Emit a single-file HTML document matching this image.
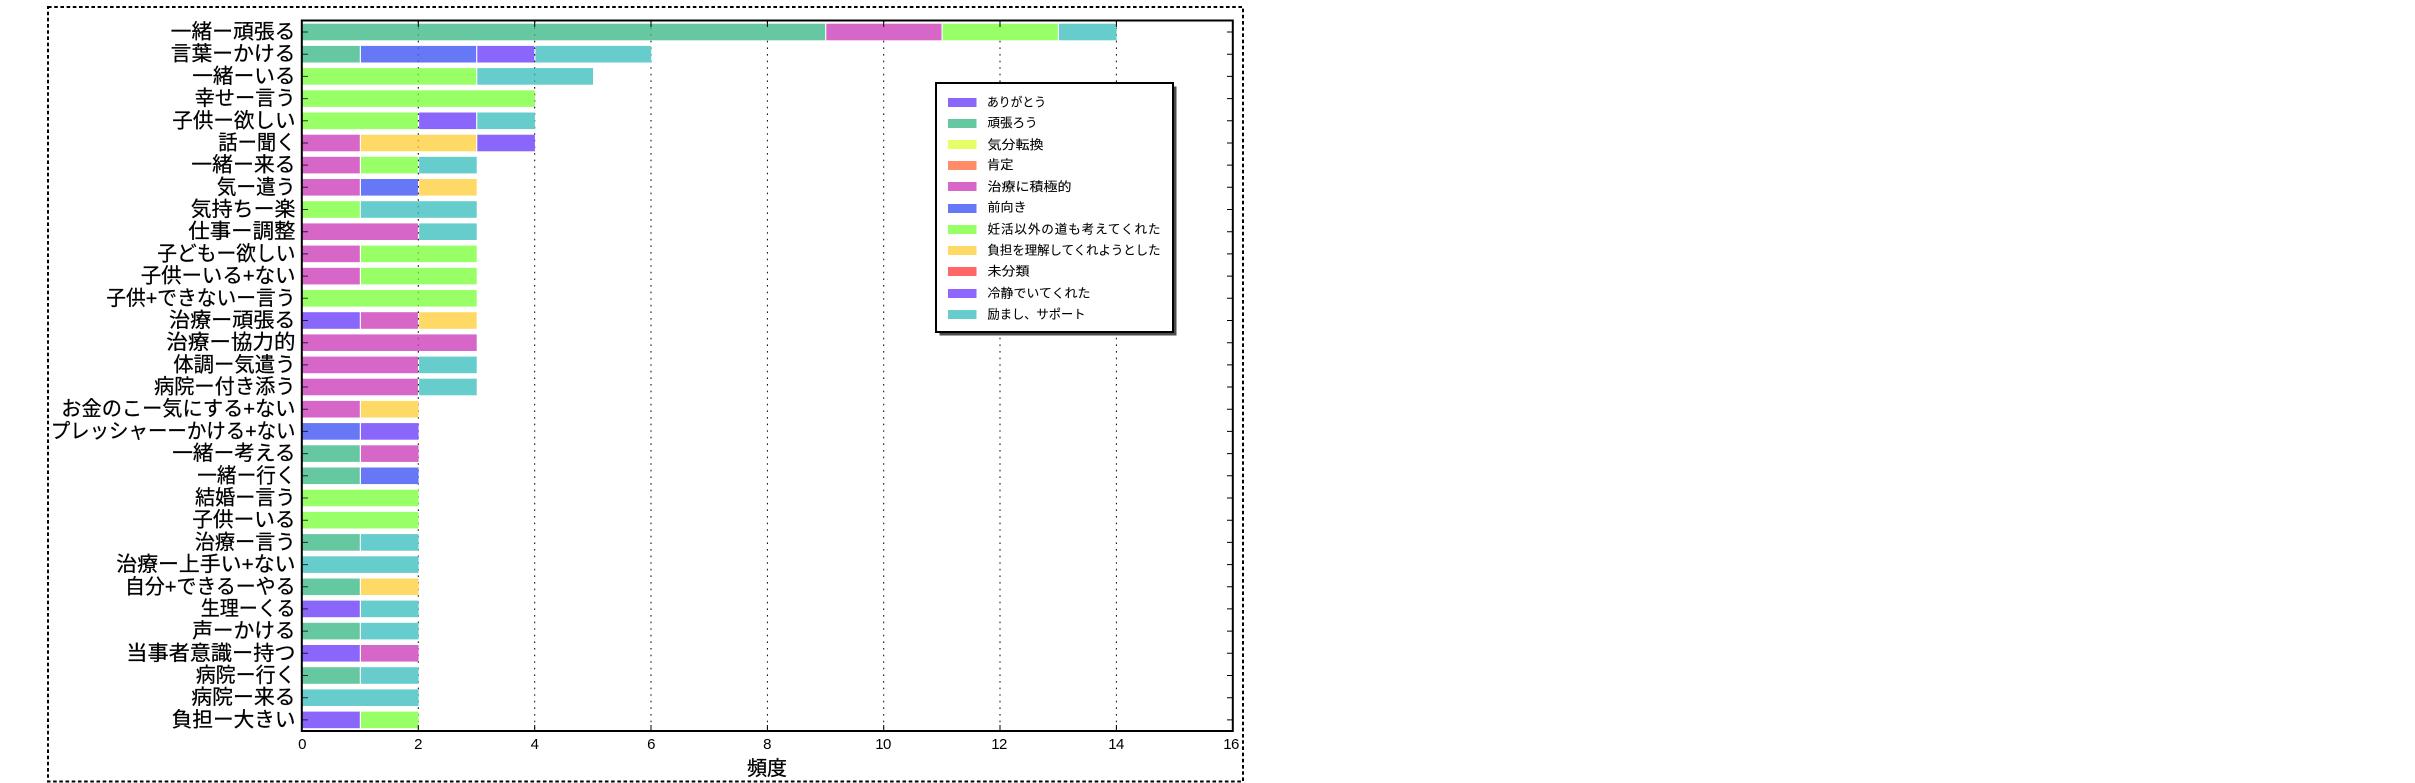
<!DOCTYPE html>
<html lang="ja">
<head>
<meta charset="utf-8">
<title>頻度</title>
<style>
html,body{margin:0;padding:0;background:#fff;width:2415px;height:783px;overflow:hidden}
svg{display:block}
text{font-family:"Liberation Sans","Noto Sans CJK JP",sans-serif;fill:#000}
.l{font-size:20.5px;stroke:#000;stroke-width:.25px}
.t{font-size:15px;text-anchor:middle;letter-spacing:-.6px}
.g{font-size:12.6px;stroke:#000;stroke-width:.1px}
.a{fill:#8a66fb}.b{fill:#66c8a0}.c{fill:#e6ff66}.d{fill:#ff8c66}.e{fill:#d666c8}.f{fill:#6678f5}.h{fill:#99ff66}.i{fill:#ffd966}.j{fill:#ff6666}.k{fill:#8f66ff}.m{fill:#66cccc}
</style>
</head>
<body>
<svg width="2415" height="783" viewBox="0 0 2415 783" xmlns="http://www.w3.org/2000/svg">
<rect width="2415" height="783" fill="#fff"/>
<rect x="48" y="7" width="1195" height="774.5" fill="none" stroke="#000" stroke-width="2" stroke-dasharray="3.6 2.6"/>
<g stroke="#000" stroke-width="1" stroke-dasharray="1.6 5" fill="none">
<path d="M418.3 21V731M534.7 21V731M651 21V731M767.4 21V731M883.7 21V731M1000 21V731M1116.4 21V731"/>
</g>

<g transform="translate(302.2,23.7) scale(58.17,1)"><rect class="b" x="0" width="8.99" height="16.6"/><rect class="e" x="9.01" width="1.98" height="16.6"/><rect class="h" x="11.01" width="1.98" height="16.6"/><rect class="m" x="13.01" width=".99" height="16.6"/></g>
<g transform="translate(302.2,45.9) scale(58.17,1)"><rect class="b" x="0" width=".99" height="16.6"/><rect class="f" x="1.01" width="1.98" height="16.6"/><rect class="a" x="3.01" width=".98" height="16.6"/><rect class="m" x="4.01" width="1.99" height="16.6"/></g>
<g transform="translate(302.2,68.1) scale(58.17,1)"><rect class="h" x="0" width="2.99" height="16.6"/><rect class="m" x="3.01" width="1.99" height="16.6"/></g>
<g transform="translate(302.2,90.3) scale(58.17,1)"><rect class="h" x="0" width="4" height="16.6"/></g>
<g transform="translate(302.2,112.5) scale(58.17,1)"><rect class="h" x="0" width="1.99" height="16.6"/><rect class="a" x="2.01" width=".98" height="16.6"/><rect class="m" x="3.01" width=".99" height="16.6"/></g>
<g transform="translate(302.2,134.7) scale(58.17,1)"><rect class="e" x="0" width=".99" height="16.6"/><rect class="i" x="1.01" width="1.98" height="16.6"/><rect class="a" x="3.01" width=".99" height="16.6"/></g>
<g transform="translate(302.2,156.8) scale(58.17,1)"><rect class="e" x="0" width=".99" height="16.6"/><rect class="h" x="1.01" width=".98" height="16.6"/><rect class="m" x="2.01" width=".99" height="16.6"/></g>
<g transform="translate(302.2,179) scale(58.17,1)"><rect class="e" x="0" width=".99" height="16.6"/><rect class="f" x="1.01" width=".98" height="16.6"/><rect class="i" x="2.01" width=".99" height="16.6"/></g>
<g transform="translate(302.2,201.2) scale(58.17,1)"><rect class="h" x="0" width=".99" height="16.6"/><rect class="m" x="1.01" width="1.99" height="16.6"/></g>
<g transform="translate(302.2,223.4) scale(58.17,1)"><rect class="e" x="0" width="1.99" height="16.6"/><rect class="m" x="2.01" width=".99" height="16.6"/></g>
<g transform="translate(302.2,245.6) scale(58.17,1)"><rect class="e" x="0" width=".99" height="16.6"/><rect class="h" x="1.01" width="1.99" height="16.6"/></g>
<g transform="translate(302.2,267.8) scale(58.17,1)"><rect class="e" x="0" width=".99" height="16.6"/><rect class="h" x="1.01" width="1.99" height="16.6"/></g>
<g transform="translate(302.2,290) scale(58.17,1)"><rect class="h" x="0" width="3" height="16.6"/></g>
<g transform="translate(302.2,312.2) scale(58.17,1)"><rect class="a" x="0" width=".99" height="16.6"/><rect class="e" x="1.01" width=".98" height="16.6"/><rect class="i" x="2.01" width=".99" height="16.6"/></g>
<g transform="translate(302.2,334.4) scale(58.17,1)"><rect class="e" x="0" width="3" height="16.6"/></g>
<g transform="translate(302.2,356.6) scale(58.17,1)"><rect class="e" x="0" width="1.99" height="16.6"/><rect class="m" x="2.01" width=".99" height="16.6"/></g>
<g transform="translate(302.2,378.7) scale(58.17,1)"><rect class="e" x="0" width="1.99" height="16.6"/><rect class="m" x="2.01" width=".99" height="16.6"/></g>
<g transform="translate(302.2,400.9) scale(58.17,1)"><rect class="e" x="0" width=".99" height="16.6"/><rect class="i" x="1.01" width=".99" height="16.6"/></g>
<g transform="translate(302.2,423.1) scale(58.17,1)"><rect class="f" x="0" width=".99" height="16.6"/><rect class="a" x="1.01" width=".99" height="16.6"/></g>
<g transform="translate(302.2,445.3) scale(58.17,1)"><rect class="b" x="0" width=".99" height="16.6"/><rect class="e" x="1.01" width=".99" height="16.6"/></g>
<g transform="translate(302.2,467.5) scale(58.17,1)"><rect class="b" x="0" width=".99" height="16.6"/><rect class="f" x="1.01" width=".99" height="16.6"/></g>
<g transform="translate(302.2,489.7) scale(58.17,1)"><rect class="h" x="0" width="2" height="16.6"/></g>
<g transform="translate(302.2,511.9) scale(58.17,1)"><rect class="h" x="0" width="2" height="16.6"/></g>
<g transform="translate(302.2,534.1) scale(58.17,1)"><rect class="b" x="0" width=".99" height="16.6"/><rect class="m" x="1.01" width=".99" height="16.6"/></g>
<g transform="translate(302.2,556.3) scale(58.17,1)"><rect class="m" x="0" width="2" height="16.6"/></g>
<g transform="translate(302.2,578.5) scale(58.17,1)"><rect class="b" x="0" width=".99" height="16.6"/><rect class="i" x="1.01" width=".99" height="16.6"/></g>
<g transform="translate(302.2,600.6) scale(58.17,1)"><rect class="a" x="0" width=".99" height="16.6"/><rect class="m" x="1.01" width=".99" height="16.6"/></g>
<g transform="translate(302.2,622.8) scale(58.17,1)"><rect class="b" x="0" width=".99" height="16.6"/><rect class="m" x="1.01" width=".99" height="16.6"/></g>
<g transform="translate(302.2,645) scale(58.17,1)"><rect class="a" x="0" width=".99" height="16.6"/><rect class="e" x="1.01" width=".99" height="16.6"/></g>
<g transform="translate(302.2,667.2) scale(58.17,1)"><rect class="b" x="0" width=".99" height="16.6"/><rect class="m" x="1.01" width=".99" height="16.6"/></g>
<g transform="translate(302.2,689.4) scale(58.17,1)"><rect class="m" x="0" width="2" height="16.6"/></g>
<g transform="translate(302.2,711.6) scale(58.17,1)"><rect class="a" x="0" width=".99" height="16.6"/><rect class="h" x="1.01" width=".99" height="16.6"/></g>

<g stroke="#000" stroke-width="1" stroke-dasharray="1.6 5" fill="none" opacity=".35">
<path d="M418.3 21V400M534.7 21V112M651 21V45"/>
</g>

<g stroke="#000" stroke-width="1" fill="none" opacity=".75">
<path d="M302 32H308M302 54.2H308M302 76.4H308M302 98.6H308M302 120.8H308M302 143H308M302 165.1H308M302 187.3H308M302 209.5H308M302 231.7H308M302 253.9H308M302 276.1H308M302 298.3H308M302 320.5H308M302 342.7H308M302 364.9H308M302 387H308M302 409.2H308M302 431.4H308M302 453.6H308M302 475.8H308M302 498H308M302 520.2H308M302 542.4H308M302 564.6H308M302 586.8H308M302 608.9H308M302 631.1H308M302 653.3H308M302 675.5H308M302 697.7H308M302 719.9H308"/>
</g>
<g stroke="#000" stroke-width="1" fill="none">
<path d="M1227 32H1233M1227 54.2H1233M1227 76.4H1233M1227 98.6H1233M1227 120.8H1233M1227 143H1233M1227 165.1H1233M1227 187.3H1233M1227 209.5H1233M1227 231.7H1233M1227 253.9H1233M1227 276.1H1233M1227 298.3H1233M1227 320.5H1233M1227 342.7H1233M1227 364.9H1233M1227 387H1233M1227 409.2H1233M1227 431.4H1233M1227 453.6H1233M1227 475.8H1233M1227 498H1233M1227 520.2H1233M1227 542.4H1233M1227 564.6H1233M1227 586.8H1233M1227 608.9H1233M1227 631.1H1233M1227 653.3H1233M1227 675.5H1233M1227 697.7H1233M1227 719.9H1233"/>
<path d="M418.3 731V725M534.7 731V725M651 731V725M767.4 731V725M883.7 731V725M1000 731V725M1116.4 731V725M418.3 21V27M534.7 21V27M651 21V27M767.4 21V27M883.7 21V27M1000 21V27M1116.4 21V27"/>
</g>
<rect x="301.8" y="20.5" width="931" height="710.5" fill="none" stroke="#000" stroke-width="2"/>

<text class="l" lengthAdjust="spacingAndGlyphs" x="170.7" textLength="124.8" y="38.5">一緒ー頑張る</text>
<text class="l" lengthAdjust="spacingAndGlyphs" x="170.7" textLength="124.8" y="60.7">言葉ーかける</text>
<text class="l" lengthAdjust="spacingAndGlyphs" x="192.3" textLength="103.2" y="82.9">一緒ーいる</text>
<text class="l" lengthAdjust="spacingAndGlyphs" x="194.7" textLength="100.8" y="105.1">幸せー言う</text>
<text class="l" lengthAdjust="spacingAndGlyphs" x="172.3" textLength="123.2" y="127.3">子供ー欲しい</text>
<text class="l" lengthAdjust="spacingAndGlyphs" x="218.3" textLength="77.2" y="149.5">話ー聞く</text>
<text class="l" lengthAdjust="spacingAndGlyphs" x="191.3" textLength="104.2" y="171.6">一緒ー来る</text>
<text class="l" lengthAdjust="spacingAndGlyphs" x="216.7" textLength="78.8" y="193.8">気ー遣う</text>
<text class="l" lengthAdjust="spacingAndGlyphs" x="190.7" textLength="104.8" y="216">気持ちー楽</text>
<text class="l" lengthAdjust="spacingAndGlyphs" x="188.3" textLength="107.2" y="238.2">仕事ー調整</text>
<text class="l" lengthAdjust="spacingAndGlyphs" x="157.3" textLength="138.2" y="260.4">子どもー欲しい</text>
<text class="l" lengthAdjust="spacingAndGlyphs" x="140.7" textLength="154.8" y="282.6">子供ーいる+ない</text>
<text class="l" lengthAdjust="spacingAndGlyphs" x="106.3" textLength="189.2" y="304.8">子供+できないー言う</text>
<text class="l" lengthAdjust="spacingAndGlyphs" x="169" textLength="126.5" y="327">治療ー頑張る</text>
<text class="l" lengthAdjust="spacingAndGlyphs" x="166.3" textLength="129.2" y="349.2">治療ー協力的</text>
<text class="l" lengthAdjust="spacingAndGlyphs" x="173.3" textLength="122.2" y="371.4">体調ー気遣う</text>
<text class="l" lengthAdjust="spacingAndGlyphs" x="154" textLength="141.5" y="393.5">病院ー付き添う</text>
<text class="l" lengthAdjust="spacingAndGlyphs" x="61.3" textLength="234.2" y="415.7">お金のこー気にする+ない</text>
<text class="l" lengthAdjust="spacingAndGlyphs" x="50.7" textLength="244.8" y="437.9">プレッシャーーかける+ない</text>
<text class="l" lengthAdjust="spacingAndGlyphs" x="172.3" textLength="123.2" y="460.1">一緒ー考える</text>
<text class="l" lengthAdjust="spacingAndGlyphs" x="197.3" textLength="98.2" y="482.3">一緒ー行く</text>
<text class="l" lengthAdjust="spacingAndGlyphs" x="195" textLength="100.5" y="504.5">結婚ー言う</text>
<text class="l" lengthAdjust="spacingAndGlyphs" x="192.3" textLength="103.2" y="526.7">子供ーいる</text>
<text class="l" lengthAdjust="spacingAndGlyphs" x="194.7" textLength="100.8" y="548.9">治療ー言う</text>
<text class="l" lengthAdjust="spacingAndGlyphs" x="116.3" textLength="179.2" y="571.1">治療ー上手い+ない</text>
<text class="l" lengthAdjust="spacingAndGlyphs" x="125" textLength="170.5" y="593.3">自分+できるーやる</text>
<text class="l" lengthAdjust="spacingAndGlyphs" x="200.7" textLength="94.8" y="615.4">生理ーくる</text>
<text class="l" lengthAdjust="spacingAndGlyphs" x="192.3" textLength="103.2" y="637.6">声ーかける</text>
<text class="l" lengthAdjust="spacingAndGlyphs" x="126.3" textLength="169.2" y="659.8">当事者意識ー持つ</text>
<text class="l" lengthAdjust="spacingAndGlyphs" x="195.7" textLength="99.8" y="682">病院ー行く</text>
<text class="l" lengthAdjust="spacingAndGlyphs" x="191.3" textLength="104.2" y="704.2">病院ー来る</text>
<text class="l" lengthAdjust="spacingAndGlyphs" x="171.7" textLength="123.8" y="726.4">負担ー大きい</text>

<text class="t" x="302" y="749">0</text>
<text class="t" x="418" y="749">2</text>
<text class="t" x="534.5" y="749">4</text>
<text class="t" x="651" y="749">6</text>
<text class="t" x="767" y="749">8</text>
<text class="t" x="883" y="749">10</text>
<text class="t" x="999" y="749">12</text>
<text class="t" x="1116" y="749">14</text>
<text class="t" x="1231" y="749">16</text>
<text x="767" y="775" font-size="20" text-anchor="middle" stroke="#000" stroke-width=".3">頻度</text>

<rect x="939.5" y="86.5" width="237" height="249" fill="#4d4d4d"/>
<rect x="936" y="83" width="237" height="249" fill="#fff" stroke="#000" stroke-width="2"/>
<rect class="a" x="948" y="98" width="28.5" height="9"/><text class="g" lengthAdjust="spacingAndGlyphs" x="987" textLength="59" y="106.3">ありがとう</text>
<rect class="b" x="948" y="119" width="28.5" height="9"/><text class="g" lengthAdjust="spacingAndGlyphs" x="987.5" textLength="50" y="127">頑張ろう</text>
<rect class="c" x="948" y="140" width="28.5" height="9"/><text class="g" lengthAdjust="spacingAndGlyphs" x="987.5" textLength="56" y="149">気分転換</text>
<rect class="d" x="948" y="161" width="28.5" height="9"/><text class="g" lengthAdjust="spacingAndGlyphs" x="987" textLength="26.5" y="169">肯定</text>
<rect class="e" x="948" y="182" width="28.5" height="9"/><text class="g" lengthAdjust="spacingAndGlyphs" x="987.5" textLength="84" y="191">治療に積極的</text>
<rect class="f" x="948" y="204" width="28.5" height="9"/><text class="g" lengthAdjust="spacingAndGlyphs" x="987.5" textLength="39" y="211.6">前向き</text>
<rect class="h" x="948" y="225" width="28.5" height="9"/><text class="g" lengthAdjust="spacing" x="987.5" textLength="173" y="233.6">妊活以外の道も考えてくれた</text>
<rect class="i" x="948" y="246" width="28.5" height="9"/><text class="g" lengthAdjust="spacingAndGlyphs" x="987.5" textLength="173" y="254.3">負担を理解してくれようとした</text>
<rect class="j" x="948" y="267" width="28.5" height="9"/><text class="g" lengthAdjust="spacingAndGlyphs" x="987.5" textLength="42" y="275.6">未分類</text>
<rect class="k" x="948" y="289" width="28.5" height="9"/><text class="g" lengthAdjust="spacingAndGlyphs" x="987.5" textLength="103" y="297.3">冷静でいてくれた</text>
<rect class="m" x="948" y="310" width="28.5" height="9"/><text class="g" lengthAdjust="spacingAndGlyphs" x="987.5" textLength="98" y="318.6">励まし、サポート</text>
</svg>
</body>
</html>
